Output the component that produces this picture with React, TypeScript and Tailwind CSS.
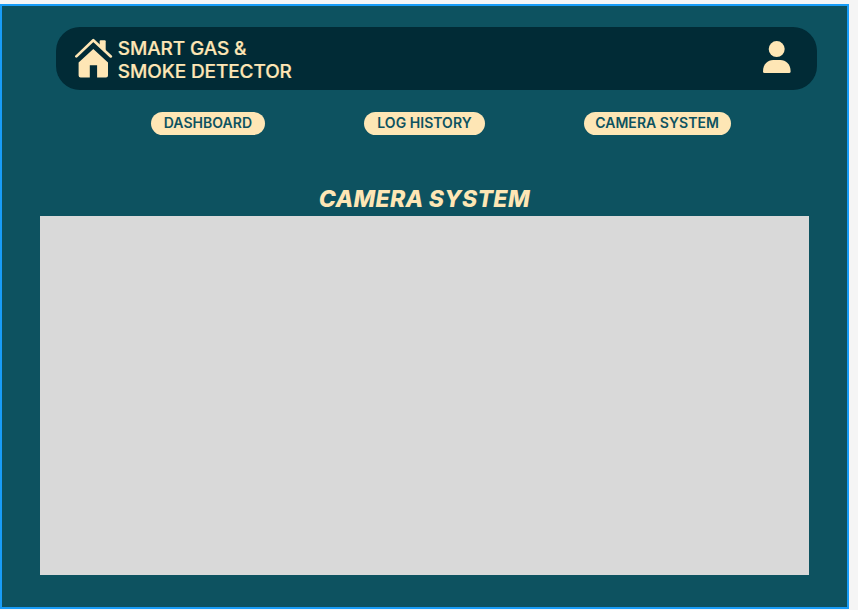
function HomeIcon() {
  return (
    <svg className="h-10 w-[38px] shrink-0" viewBox="0 0 38 40" fill="#fee6b5" aria-hidden="true">
      <path d="M1.4 18.4 18.3 2.2 35.8 18.4" fill="none" stroke="#fee6b5" strokeWidth="2.7" strokeLinecap="round" strokeLinejoin="round" />
      <path d="M24.7 3.2q0-1 1-1h4q1 0 1 1v10.3l-6-5.5z" />
      <path d="M18.3 11 33 24.4v13.2q0 2-2 2h-8.9V27.2h-7.3v12.4H5.6q-2 0-2-2V24.4z" />
    </svg>
  );
}

function UserIcon() {
  return (
    <svg className="mb-[2px] h-8 w-7 shrink-0" viewBox="0 0 28 32" fill="#fee6b5" aria-hidden="true">
      <circle cx="13.7" cy="8.1" r="8" />
      <path d="M0 30.5C0 23 4.8 19.1 10.2 19.1h7.2c5.4 0 10.2 3.9 10.2 11.4q0 1.5-1.5 1.5H1.5Q0 32 0 30.5z" />
    </svg>
  );
}

const pill = "flex h-[22.6px] items-center justify-center rounded-full bg-[#fee6b5] pb-[1.6px] text-[14px] font-semibold tracking-[0.04px] text-[#0d5260]";

export default function App() {
  return (
    <div className="h-[610px] w-[858px] overflow-hidden bg-[#f5f5f5] pt-1 font-['Inter',sans-serif]">
      <div className="h-[605px] w-[849px] border-2 border-[#189df8] bg-[#0d5260]">
        <header className="mt-[21px] ml-[53.5px] flex h-[62.5px] w-[761.5px] items-center rounded-[24px] bg-[#012b36] pr-[26px] pl-[19px]">
          <HomeIcon />
          <h1 className="mt-[3px] ml-[5.3px] flex-1 text-[19px] leading-[23px] font-medium tracking-[-0.1px] text-[#fee6b5] [-webkit-text-stroke:0.2px_#fee6b5]">
            SMART GAS &amp;
            <br />
            SMOKE DETECTOR
          </h1>
          <UserIcon />
        </header>
        <nav className="mt-[22.7px] ml-[148.6px] flex">
          <a className={`${pill} w-[114.7px]`}>DASHBOARD</a>
          <a className={`${pill} ml-[98.6px] w-[121.3px]`}>LOG HISTORY</a>
          <a className={`${pill} ml-[98.4px] w-[147px]`}>CAMERA SYSTEM</a>
        </nav>
        <main className="mt-[50px] ml-[38px] w-[768.6px]">
          <h2 className="h-[30.8px] text-center text-[23px] leading-[29px] font-extrabold tracking-[0.32px] text-[#fee6b5] italic">CAMERA SYSTEM</h2>
          <div className="h-[359.5px] bg-[#d9d9d9]" />
        </main>
      </div>
    </div>
  );
}
